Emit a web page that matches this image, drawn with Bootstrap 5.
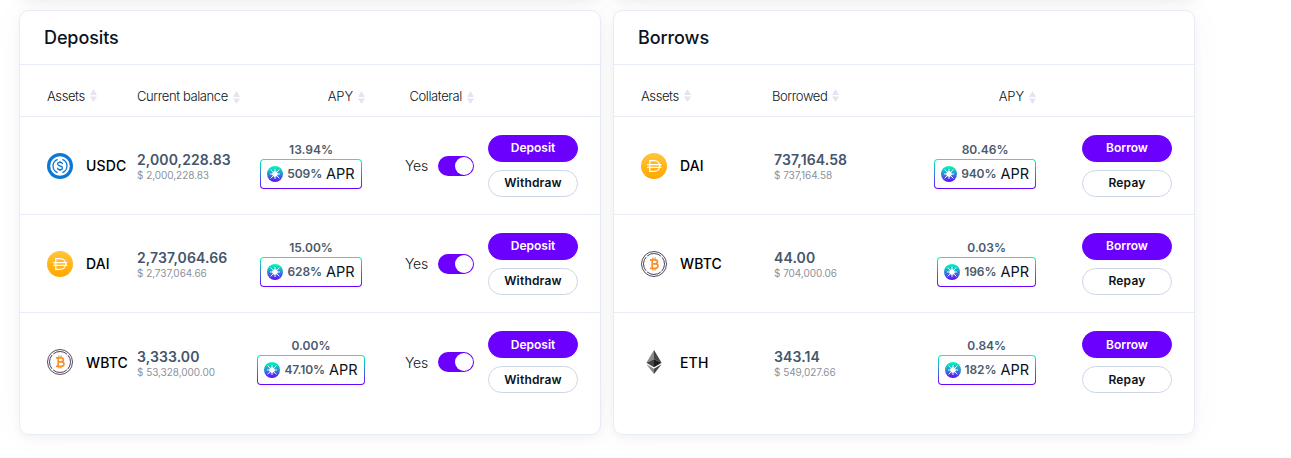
<!DOCTYPE html>
<html lang="en">
  <head>
    <meta charset="UTF-8">
    <meta name="viewport" content="width=device-width, initial-scale=1.0">
    <title>Deposits and borrows</title>
    <link href="https://cdn.jsdelivr.net/npm/bootstrap@5.3.3/dist/css/bootstrap.min.css" rel="stylesheet">
    <style>
      body { font-family: Inter, 'Open Sans', sans-serif; color: #0b1320; background: #fff; overflow: hidden; height: 458px; font-size: 14px; }
      .panels { gap: 12px; padding-left: 19px; }
      .panel { width: 582px; background: #fff; border: 1px solid #e6edf8; border-radius: 10px; box-shadow: 0 4px 10px rgba(20, 20, 43, .04), 0 0 40px rgba(20, 20, 43, .03); }
      .panels-prev { height: 0; margin-bottom: 10px; }
      .panels-prev .panel { height: 60px; margin-top: -61px; flex-shrink: 0; }
      .panel-main { height: 425px; }
      .panel-title { height: 54px; padding: 0 24px; border-bottom: 1px solid #e6edf8; font-size: 18px; font-weight: 500; letter-spacing: -.1px; color: #0b1320; margin: 0; }
      .line { display: grid; align-items: center; height: 98px; padding: 0 22px 0 27px; border-bottom: 1px solid #e6edf8; }
      .line:last-child { border-bottom: 0; }
      .line.heads { height: 52px; padding-top: 12px; font-size: 13px; font-weight: 300; letter-spacing: -.4px; white-space: nowrap; }
      .heads .apy { letter-spacing: -.1px; }
      .dep .line { grid-template-columns: 90px 120px 108px 109px 104px; }
      .bor .line { grid-template-columns: 131px 162px 102px 136px; }
      .bor .amount { padding-left: 2px; }
      .sort { width: 7px; height: 13px; margin-left: 5px; fill: #e6e3f1; position: relative; top: 1px; }
      .sort-first { top: -1px; }
      .asset { font-weight: 450; font-size: 14px; letter-spacing: .15px; color: #000; }
      .asset svg { width: 26px; height: 26px; margin-right: 13px; }
      .amount { padding-top: 3px; }
      .amount b { display: block; font-size: 14px; line-height: 17px; font-weight: 600; letter-spacing: .1px; color: #44566b; }
      .amount span { display: block; font-size: 10px; line-height: 15px; letter-spacing: -.05px; color: #8c929c; }
      .rate { font-size: 12px; line-height: 13px; margin-bottom: 3px; font-weight: 600; color: #4a5a6c; }
      .reward { height: 30px; padding: 0 6px; border: 1px solid transparent; border-radius: 4px; background: linear-gradient(#fff, #fff) padding-box, linear-gradient(#00ffb2, #6a00ff) border-box; color: #0b1320; font-size: 14.5px; font-weight: 400; white-space: nowrap; }
      .reward svg { width: 16px; height: 16px; margin-right: 4px; }
      .reward b { font-size: 12px; font-weight: 600; color: #4a5a6c; letter-spacing: -.1px; margin-right: 4px; }
      .yes { font-weight: 300; letter-spacing: -.2px; margin-right: 10px; }
      .toggle { width: 36px; height: 20px; border-radius: 10px; background: #6b00ff; padding: 1px; }
      .toggle i { width: 18px; height: 18px; border-radius: 50%; background: #fff; }
      .btn-pill { width: 90px; height: 27px; padding: 0; font-size: 12px; line-height: 24px; font-weight: 600; letter-spacing: .2px; border-radius: 14px; border: 1px solid #ccd6e6; color: #0b1320; background: #fff; }
      .btn-fill { border-color: #6b00ff; background: #6b00ff; color: #fff; letter-spacing: 0; }
    </style>
  </head>
  <body>
    <svg width="0" height="0" class="position-absolute">
      <defs>
        <linearGradient id="g-reward" x1="0" y1="0" x2="0" y2="1"><stop offset="0" stop-color="#00ffb2"/><stop offset=".5" stop-color="#2a8fd8"/><stop offset="1" stop-color="#6a00ff"/></linearGradient>
        <linearGradient id="g-dai" x1="0" y1="0" x2="0" y2="1"><stop offset="0" stop-color="#ffc53a"/><stop offset="1" stop-color="#ffa800"/></linearGradient>
      </defs>
      <symbol id="sort" viewBox="0 0 7 13"><path d="M3.5 0 7 6H0zM0 7.5h7L3.5 13z"/></symbol>
      <symbol id="reward" viewBox="0 0 16 16">
        <circle cx="8" cy="8" r="8" fill="url(#g-reward)"/>
        <path d="M8 3v10M3 8h10M3.6 3.6l8.8 8.8M12.4 3.6l-8.8 8.8" stroke="#fff" stroke-width=".9"/>
        <circle cx="8" cy="8" r="2.7" fill="#fff"/>
      </symbol>
      <symbol id="usdc" viewBox="0 0 26 26">
        <circle cx="13" cy="13" r="13" fill="#0b78d6"/><circle cx="13" cy="13" r="9.8" fill="#fff"/>
        <g fill="none" stroke="#0b78d6" stroke-width="1.3">
          <path d="M10.6 6.3a7.2 7.2 0 0 0 0 13.4M15.4 6.3a7.2 7.2 0 0 1 0 13.4"/>
          <path d="M15.4 11.2c0-1.1-.9-1.8-2.4-1.8s-2.4.6-2.4 1.7c0 2.6 4.9 1.2 4.9 3.8 0 1.1-1 1.7-2.5 1.7s-2.5-.7-2.5-1.9M13 8v1.5M13 16.5V18"/>
        </g>
      </symbol>
      <symbol id="dai" viewBox="0 0 26 26">
        <circle cx="13" cy="13" r="13" fill="url(#g-dai)"/>
        <path d="M8.8 7.6h4.3c3.4 0 5.6 2.3 5.6 5.4s-2.2 5.4-5.6 5.4H8.8zM6.2 11.6h14.2M6.2 14.4h14.2" fill="none" stroke="#fff" stroke-width="1.2"/>
      </symbol>
      <symbol id="wbtc" viewBox="0 0 26 26">
        <g fill="none" stroke="#41364f">
          <circle cx="13" cy="13" r="12.5" stroke-width=".9"/>
          <circle cx="13" cy="13" r="10.5" stroke-width=".9" stroke-dasharray="14.9 1.59" stroke-dashoffset="-.8" transform="rotate(45 13 13)"/>
        </g>
        <g fill="none" stroke="#f7902c" stroke-width="1.7">
          <path d="M9 8.8h5c3.2 0 3.2 4 0 4h-3M9 17.4h5.3c3.7 0 3.5-4.6 0-4.6M11.2 8.8v8.6"/>
          <path d="M11.9 6.6v2M14.1 6.6v2M11.9 17.6v2M14.1 17.6v2" stroke-width="1.2"/>
        </g>
      </symbol>
      <symbol id="eth" viewBox="0 0 26 26">
        <path d="M13 1v9.3l-7.6 3.5z" fill="#8a8a8a"/><path d="M13 1v9.3l7.6 3.5z" fill="#454545"/>
        <path d="M5.4 13.8 13 10.3v8z" fill="#454545"/><path d="M20.6 13.8 13 10.3v8z" fill="#1e1e1e"/>
        <path d="M5.4 15.2 13 19.7V25z" fill="#8a8a8a"/><path d="M20.6 15.2 13 19.7V25z" fill="#454545"/>
      </symbol>
    </svg>

    <div class="panels panels-prev d-flex">
      <div class="panel"></div>
      <div class="panel"></div>
    </div>

    <main class="panels d-flex">
      <section class="panel panel-main dep">
        <h2 class="panel-title d-flex align-items-center"><span>Deposits</span></h2>
        <div class="line heads">
          <div class="d-flex align-items-center"><span>Assets</span><svg class="sort sort-first"><use href="#sort"/></svg></div>
          <div class="d-flex align-items-center"><span>Current balance</span><svg class="sort"><use href="#sort"/></svg></div>
          <div class="d-flex align-items-center justify-content-end"><span class="apy">APY</span><svg class="sort"><use href="#sort"/></svg></div>
          <div class="d-flex align-items-center justify-content-end"><span>Collateral</span><svg class="sort"><use href="#sort"/></svg></div>
        </div>
        <div class="line">
          <div class="asset d-flex align-items-center"><svg><use href="#usdc"/></svg><span>USDC</span></div>
          <div class="amount"><b>2,000,228.83</b><span>$ 2,000,228.83</span></div>
          <div class="d-flex flex-column align-items-center"><div class="rate">13.94%</div><div class="reward d-flex align-items-center"><svg><use href="#reward"/></svg><b>509%</b><span>APR</span></div></div>
          <div class="d-flex align-items-center justify-content-end"><span class="yes">Yes</span><div class="toggle d-flex justify-content-end"><i></i></div></div>
          <div class="d-flex flex-column align-items-end gap-2"><button class="btn btn-pill btn-fill">Deposit</button><button class="btn btn-pill">Withdraw</button></div>
        </div>
        <div class="line">
          <div class="asset d-flex align-items-center"><svg><use href="#dai"/></svg><span>DAI</span></div>
          <div class="amount"><b>2,737,064.66</b><span>$ 2,737,064.66</span></div>
          <div class="d-flex flex-column align-items-center"><div class="rate">15.00%</div><div class="reward d-flex align-items-center"><svg><use href="#reward"/></svg><b>628%</b><span>APR</span></div></div>
          <div class="d-flex align-items-center justify-content-end"><span class="yes">Yes</span><div class="toggle d-flex justify-content-end"><i></i></div></div>
          <div class="d-flex flex-column align-items-end gap-2"><button class="btn btn-pill btn-fill">Deposit</button><button class="btn btn-pill">Withdraw</button></div>
        </div>
        <div class="line">
          <div class="asset d-flex align-items-center"><svg><use href="#wbtc"/></svg><span>WBTC</span></div>
          <div class="amount"><b>3,333.00</b><span>$ 53,328,000.00</span></div>
          <div class="d-flex flex-column align-items-center"><div class="rate">0.00%</div><div class="reward d-flex align-items-center"><svg><use href="#reward"/></svg><b>47.10%</b><span>APR</span></div></div>
          <div class="d-flex align-items-center justify-content-end"><span class="yes">Yes</span><div class="toggle d-flex justify-content-end"><i></i></div></div>
          <div class="d-flex flex-column align-items-end gap-2"><button class="btn btn-pill btn-fill">Deposit</button><button class="btn btn-pill">Withdraw</button></div>
        </div>
      </section>

      <section class="panel panel-main bor">
        <h2 class="panel-title d-flex align-items-center"><span>Borrows</span></h2>
        <div class="line heads">
          <div class="d-flex align-items-center"><span>Assets</span><svg class="sort sort-first"><use href="#sort"/></svg></div>
          <div class="d-flex align-items-center"><span>Borrowed</span><svg class="sort sort-first"><use href="#sort"/></svg></div>
          <div class="d-flex align-items-center justify-content-end"><span class="apy">APY</span><svg class="sort"><use href="#sort"/></svg></div>
        </div>
        <div class="line">
          <div class="asset d-flex align-items-center"><svg><use href="#dai"/></svg><span>DAI</span></div>
          <div class="amount"><b>737,164.58</b><span>$ 737,164.58</span></div>
          <div class="d-flex justify-content-end"><div class="d-flex flex-column align-items-center"><div class="rate">80.46%</div><div class="reward d-flex align-items-center"><svg><use href="#reward"/></svg><b>940%</b><span>APR</span></div></div></div>
          <div class="d-flex flex-column align-items-end gap-2"><button class="btn btn-pill btn-fill">Borrow</button><button class="btn btn-pill">Repay</button></div>
        </div>
        <div class="line">
          <div class="asset d-flex align-items-center"><svg><use href="#wbtc"/></svg><span>WBTC</span></div>
          <div class="amount"><b>44.00</b><span>$ 704,000.06</span></div>
          <div class="d-flex justify-content-end"><div class="d-flex flex-column align-items-center"><div class="rate">0.03%</div><div class="reward d-flex align-items-center"><svg><use href="#reward"/></svg><b>196%</b><span>APR</span></div></div></div>
          <div class="d-flex flex-column align-items-end gap-2"><button class="btn btn-pill btn-fill">Borrow</button><button class="btn btn-pill">Repay</button></div>
        </div>
        <div class="line">
          <div class="asset d-flex align-items-center"><svg><use href="#eth"/></svg><span>ETH</span></div>
          <div class="amount"><b>343.14</b><span>$ 549,027.66</span></div>
          <div class="d-flex justify-content-end"><div class="d-flex flex-column align-items-center"><div class="rate">0.84%</div><div class="reward d-flex align-items-center"><svg><use href="#reward"/></svg><b>182%</b><span>APR</span></div></div></div>
          <div class="d-flex flex-column align-items-end gap-2"><button class="btn btn-pill btn-fill">Borrow</button><button class="btn btn-pill">Repay</button></div>
        </div>
      </section>
    </main>
    <script src="https://cdn.jsdelivr.net/npm/bootstrap@5.3.3/dist/js/bootstrap.bundle.min.js"></script>
  </body>
</html>
